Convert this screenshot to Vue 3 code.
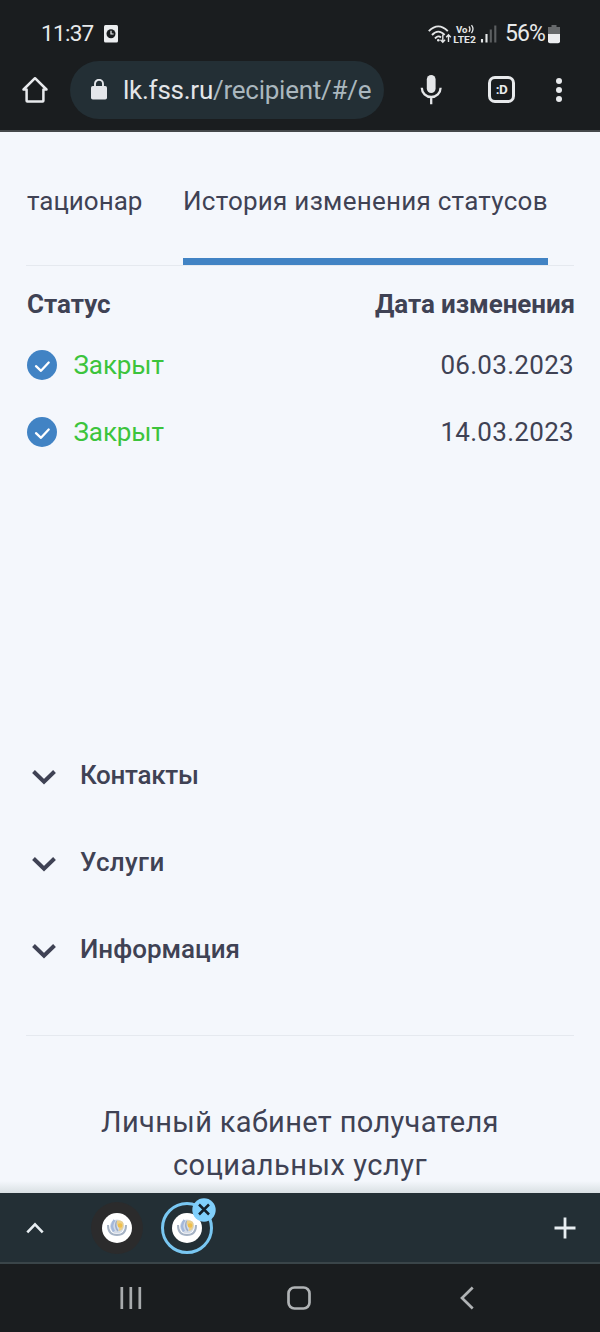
<script setup>
const statuses = [
  { name: 'Закрыт', date: '06.03.2023' },
  { name: 'Закрыт', date: '14.03.2023' },
]
const sections = [
  { title: 'Контакты', cls: 'contacts' },
  { title: 'Услуги', cls: 'services' },
  { title: 'Информация', cls: 'info' },
]
const tabs = [{ active: false }, { active: true }]
</script>

<template>
  <div class="screen">
    <header class="status-bar">
      <span class="time">11:37</span>
      <svg class="notice" width="14" height="18" viewBox="0 0 14 18">
        <rect width="14" height="17.4" rx="1.5" fill="#eceef0" />
        <circle cx="7" cy="8.7" r="4.5" fill="#1a1d1f" />
        <path d="M7 5.8V9h2.6" fill="none" stroke="#eceef0" stroke-width="1.2" />
      </svg>
      <span class="spacer"></span>
      <svg class="signals" width="70" height="22" viewBox="0 0 70 22">
        <g fill="none" stroke="#e4e6e7" stroke-width="1.9">
          <path d="M.8 7.2Q10.3-2.400 19.800 7.200" />
          <path d="M4 11Q10.300 4.200 16.600 11" />
          <path d="M7 14.500Q10.300 10.800 13 13.500" />
          <path d="M14.800 10.800V18M12.500 15.800l2.300 2.400 2.300-2.400M20.500 18V11M18.200 13.200l2.300-2.400 2.300 2.400" stroke-width="1.400" />
        </g>
        <circle cx="10.300" cy="16.300" r="1.300" fill="#e4e6e7" />
        <text x="28" y="8.800" textLength="11.500" lengthAdjust="spacingAndGlyphs" class="lte">Vo</text>
        <path d="M41 2.300q2 2.700 0 5.700M43.500 1.200q3 3.800 0 7.900" fill="none" stroke="#e4e6e7" stroke-width="1.300" />
        <text x="25.300" y="18.700" textLength="22.500" lengthAdjust="spacingAndGlyphs" class="lte">LTE2</text>
        <g stroke-width="2.100" stroke="#e4e6e7">
          <path d="M54 15v3.600M58.500 10v8.600" />
          <path d="M62.800 5.400v13.200M67.300 1.400v17.200" stroke="#5c5f61" />
        </g>
      </svg>
      <span class="percent">56%</span>
      <svg class="battery" width="12" height="19" viewBox="0 0 12 19">
        <path d="M3.500 0h5v2H12v8H0V2h3.500z" fill="#66696b" />
        <path d="M0 9h12v7.200a2 2 0 0 1-2 2H2a2 2 0 0 1-2-2z" fill="#eceef0" />
      </svg>
    </header>

    <div class="toolbar">
      <svg class="home" width="28" height="28" viewBox="0 0 28 28">
        <path d="M14 2.200 2.500 13.500H5.600V24.800Q5.600 25.500 6.300 25.500H21.700Q22.400 25.500 22.400 24.800V13.500H25.500Z" fill="none" stroke="#e8eaed" stroke-width="2.500" stroke-linejoin="round" />
      </svg>
      <div class="address">
        <svg class="lock" width="16" height="21" viewBox="0 0 16 21">
          <rect y="7" width="16" height="13.500" rx="1.800" fill="#e4e6ea" />
          <path d="M4 8V4.800a4 4 0 0 1 8 0V8" fill="none" stroke="#e4e6ea" stroke-width="1.900" />
        </svg>
        <span class="url">lk.fss.ru<span class="path">/recipient/#/e</span></span>
      </div>
      <svg class="mic" width="22" height="30" viewBox="0 0 22 30">
        <rect x="6.800" y="0" width="8.800" height="18" rx="4.400" fill="#e4e6e8" />
        <path d="M1.800 12.800a9.400 9.200 0 0 0 18.800 0M11.200 22v7.300" fill="none" stroke="#e4e6e8" stroke-width="2.300" />
      </svg>
      <div class="tab-count">:D</div>
      <div class="menu"><i></i><i></i><i></i></div>
    </div>

    <main class="page">
      <nav class="tabs">
        <span class="tab first">тационар</span>
        <span class="tab active">История изменения статусов</span>
      </nav>
      <div class="row head">
        <span class="h-status">Статус</span>
        <span class="h-date">Дата изменения</span>
      </div>
      <div v-for="s in statuses" :key="s.date" class="row">
        <svg class="check" width="30" height="30" viewBox="0 0 30 30">
          <circle cx="15" cy="15" r="15" fill="#4183c4" />
          <path d="M9 16.200l5 4.600L21.700 12.500" fill="none" stroke="#fff" stroke-width="2.300" stroke-linecap="round" stroke-linejoin="round" />
        </svg>
        <span class="state">{{ s.name }}</span>
        <span class="date">{{ s.date }}</span>
      </div>

      <div class="accordion">
        <div v-for="s in sections" :key="s.cls" class="section">
          <svg width="24" height="15" viewBox="0 0 24 15">
            <path d="M1.500 1.500 12 11.700 22.500 1.500" fill="none" stroke="#3f4254" stroke-width="4" />
          </svg>
          <span :class="s.cls">{{ s.title }}</span>
        </div>
      </div>

      <footer class="footer">
        <div class="line1">Личный кабинет получателя</div>
        <div class="line2">социальных услуг</div>
      </footer>
    </main>

    <div class="tab-strip">
      <svg class="chevron" width="18" height="12" viewBox="0 0 18 12">
        <path d="M1.300 10.300 9 2.300l7.700 8" fill="none" stroke="#e8eef2" stroke-width="2.600" />
      </svg>
      <div v-for="(t, i) in tabs" :key="i" class="bubble" :class="{ current: t.active }">
        <svg width="30" height="30" viewBox="0 0 30 30">
          <circle cx="15" cy="15" r="15" fill="#fff" />
          <circle cx="15" cy="13.500" r="7" fill="#d3dbe7" />
          <path d="M12.500 7Q8 12.500 12 18.500" fill="none" stroke="#a4b8da" stroke-width="2.400" />
          <path d="M15 8q-3 5 1 10" fill="none" stroke="#9aabc9" stroke-width="1.600" />
          <path d="M15 7.500q7.500-.500 6.500 5-.500 5-5 5.500l1-4-3-3z" fill="#ecd08a" />
          <circle cx="18" cy="12.500" r="2.300" fill="#f0bf4c" />
          <path d="M6 12q0 10 9 10T24 12" fill="none" stroke="#a5b2c4" stroke-width="2" />
        </svg>
        <svg v-if="t.active" class="close" width="24" height="24" viewBox="0 0 24 24">
          <circle cx="12" cy="12" r="11.700" fill="#80cffb" />
          <path d="M7 6.500l10 10M17 6.500l-10 10" stroke="#14212b" stroke-width="2.500" />
        </svg>
      </div>
      <span class="spacer"></span>
      <svg class="plus" width="22" height="22" viewBox="0 0 22 22">
        <path d="M11 .500v21M.500 11h21" stroke="#e8eef2" stroke-width="2.800" />
      </svg>
    </div>

    <div class="sysnav">
      <svg width="22" height="24" viewBox="0 0 22 24">
        <path d="M1.800 1v22M10.800 1v22M19.800 1v22" stroke="#a8abad" stroke-width="2.700" />
      </svg>
      <svg width="24" height="24" viewBox="0 0 24 24">
        <rect x="1.500" y="1.500" width="21" height="21" rx="6" fill="none" stroke="#b0b3b5" stroke-width="2.700" />
      </svg>
      <svg width="14" height="24" viewBox="0 0 14 24">
        <path d="M12.700 1.500 2 12l10.700 10.500" fill="none" stroke="#b0b3b5" stroke-width="2.700" />
      </svg>
    </div>
  </div>
</template>

<style>
body { background: #f4f7fc; }
</style>

<style scoped>
.screen { width: 600px; height: 1332px; display: flex; flex-direction: column; overflow: hidden; font-family: Roboto, "Liberation Sans", sans-serif; color: #3f4254; background: #f4f7fc; white-space: nowrap; }
svg { display: block; flex: none; }
.spacer { flex: 1; }
.status-bar { height: 60px; flex: none; box-sizing: border-box; background: #1a1d1f; display: flex; align-items: flex-start; padding: 20px 40px 0 41px; color: #e8eaeb; font-size: 23px; line-height: 27px; }
.time { width: 63px; font-size: 22.500px; letter-spacing: -.7px; }
.notice { margin-top: 5px; }
.signals { margin: 4px 7px 0 0; }
.lte { font: 700 9.800px Roboto, sans-serif; fill: #e4e6e7; }
.percent { width: 43px; letter-spacing: -.900px; }
.battery { margin-top: 5px; }
.toolbar { height: 72px; flex: none; box-sizing: border-box; background: #1a1d1f; border-bottom: 2px solid #45484b; display: flex; align-items: flex-start; padding-left: 21px; }
.home { margin-top: 16px; }
.address { margin-left: 21px; width: 314px; height: 58px; margin-top: 1px; border-radius: 29px; background: #232f35; display: flex; align-items: center; box-sizing: border-box; padding-left: 21px; }
.lock { margin-top: -2px; }
.url { margin-left: 16px; font-size: 26px; line-height: 30px; letter-spacing: -.250px; color: #e3e6e9; }
.path { color: #aab7be; }
.mic { margin: 15px 0 0 36px; }
.tab-count { margin: 16px 0 0 46px; width: 27px; height: 27px; box-sizing: border-box; border: 3px solid #e8eaec; border-radius: 7px; text-align: center; font-size: 13.500px; line-height: 21px; font-weight: 700; letter-spacing: -.500px; color: #e8eaec; }
.menu { margin: 18px 0 0 41px; display: flex; flex-direction: column; gap: 3px; }
.menu i { width: 6px; height: 6px; border-radius: 3px; background: #e8eaec; }
.page { height: 1061px; flex: none; box-sizing: border-box; padding: 0 26px; overflow: hidden; background: linear-gradient(to bottom, transparent calc(100% - 12px), #d9e0e3), #f4f7fc; }
.tabs { height: 134px; box-sizing: border-box; border-bottom: 1px solid #e5e9ef; display: flex; }
.tab { height: 133px; box-sizing: border-box; padding-top: 54px; font-size: 26px; line-height: 30px; }
.first { width: 157px; padding-left: 1px; }
.active { width: 365px; border-bottom: 7px solid #4183c4; letter-spacing: .260px; }
.row { height: 67px; display: flex; align-items: center; font-size: 26px; line-height: 30px; }
.head { height: 65px; box-sizing: border-box; padding: 11px 0 0 1px; margin-right: -1px; justify-content: space-between; font-weight: 700; }
.h-date { letter-spacing: -.080px; }
.check { margin: 1px 0 0 .500px; }
.state { margin-left: 17px; letter-spacing: -.100px; color: #3cc43c; }
.date { margin-left: auto; letter-spacing: .300px; }
.accordion { margin-top: 268px; height: 302px; }
.section { height: 87px; display: flex; align-items: center; padding-left: 6px; gap: 24px; font-size: 26px; line-height: 30px; font-weight: 500; }
.section span { margin-top: -3px; }
.section svg { margin-top: 1px; }
.contacts { letter-spacing: -.300px; }
.services { letter-spacing: .350px; }
.footer { border-top: 1px solid #e5e9ef; padding-top: 65px; text-align: center; font-size: 29px; line-height: 43px; }
.line1 { letter-spacing: .350px; }
.line2 { letter-spacing: .500px; }
.tab-strip { height: 71px; flex: none; box-sizing: border-box; background: #232f35; border-bottom: 2px solid #3a4549; display: flex; align-items: center; padding: 1px 24px 0 26px; }
.bubble { position: relative; width: 52px; height: 52px; box-sizing: border-box; border-radius: 50%; background: #2b2b2c; display: flex; align-items: center; justify-content: center; margin-left: 47px; }
.current { margin-left: 17.500px; background: none; border: 3px solid #79c7f2; }
.close { position: absolute; right: -6px; top: -7px; }
.sysnav { height: 68px; flex: none; background: #1a1d1f; display: flex; align-items: center; padding-left: 120px; }
.sysnav svg:nth-child(2) { margin-left: 145px; }
.sysnav svg:nth-child(3) { margin-left: 149px; }
</style>
